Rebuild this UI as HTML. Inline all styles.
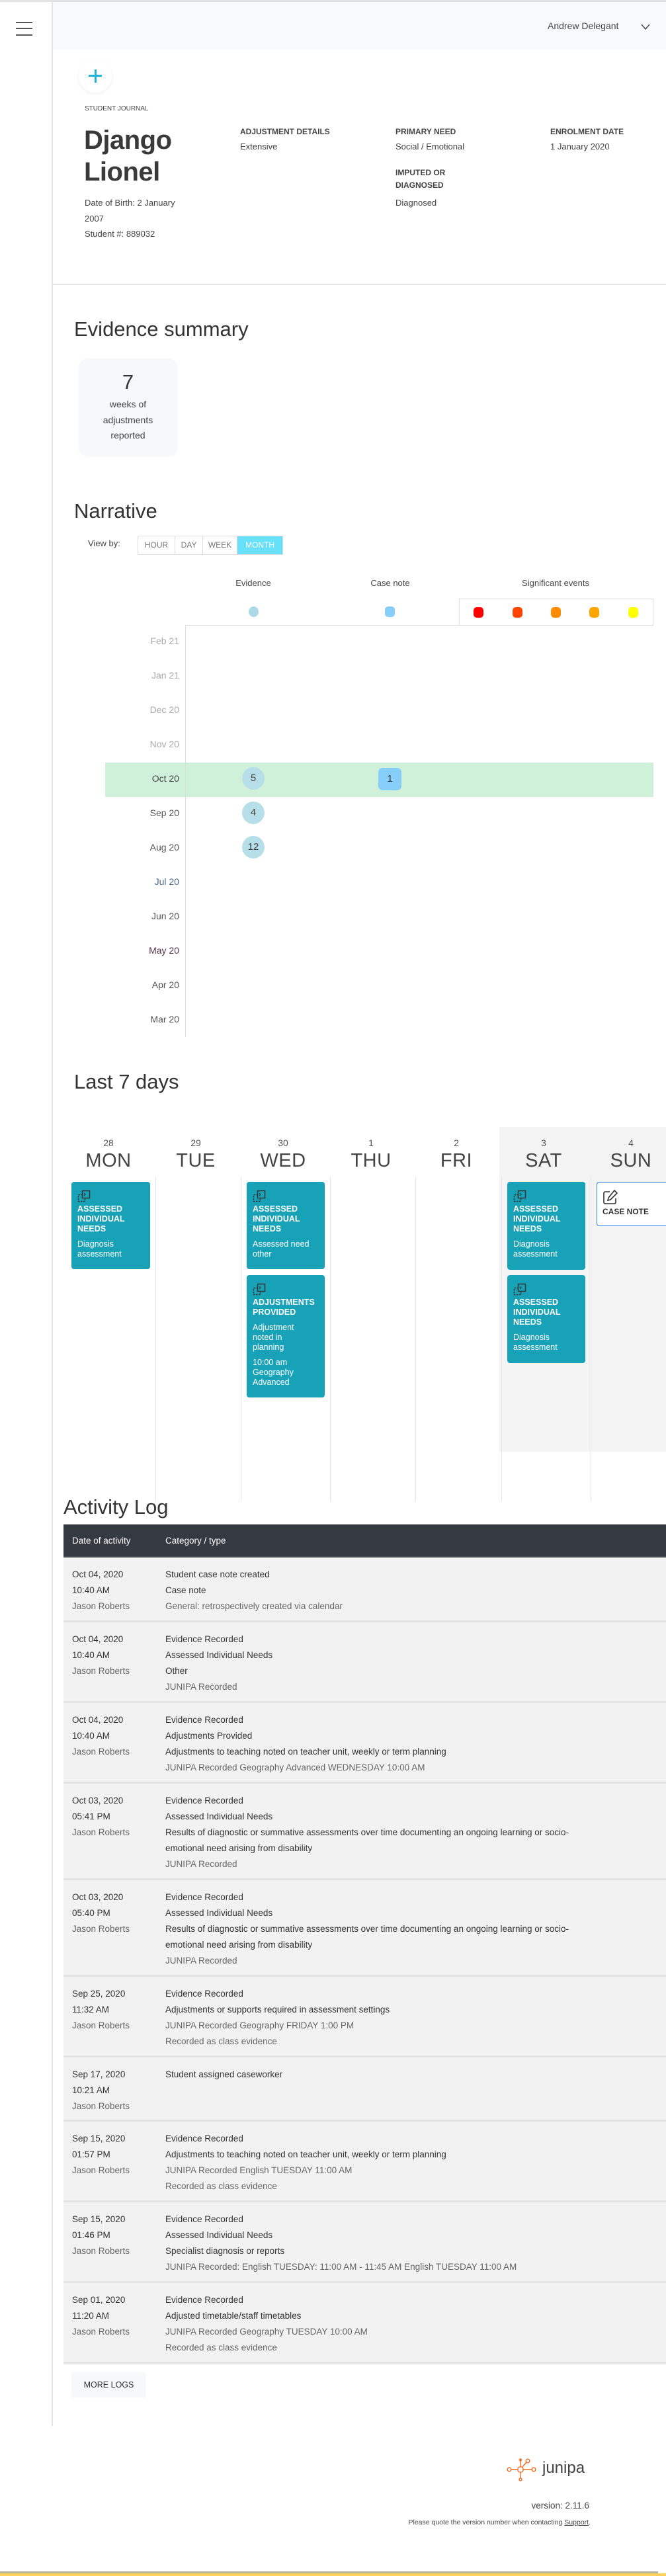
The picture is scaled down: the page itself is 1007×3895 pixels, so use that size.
<!DOCTYPE html>
<html><head><meta charset="utf-8">
<style>
*{margin:0;padding:0;box-sizing:border-box}
body{width:1007px;height:3895px;position:relative;background:#fff;font-family:"Liberation Sans",sans-serif;color:#333;overflow:hidden}
.a{position:absolute;white-space:nowrap}
.h2{font-size:31px;color:#333;line-height:36px}
.lab{font-size:12px;font-weight:bold;color:#444;text-transform:uppercase}
.val{font-size:13px;color:#444}
.mo{position:absolute;left:160px;width:111px;text-align:right;font-size:14px;color:#555;line-height:20px}
.badge{position:absolute;width:34px;height:34px;border-radius:50%;background:#b7dfe9;font-size:15px;color:#444;text-align:center;line-height:34px}
.dn{position:absolute;width:120px;text-align:center;font-size:14px;color:#555}
.dw{position:absolute;width:130px;text-align:center;font-size:29px;color:#444;letter-spacing:0.5px}
.sep{position:absolute;top:1779px;height:491px;width:1px;background:#e6e6e6}
.card{position:absolute;width:118px;background:#18a2b7;border-radius:4px;color:#fff;padding:12px 9px 0 9px}
.card svg{display:block;margin-bottom:2px}
.card .t{font-weight:bold;font-size:12.5px;line-height:15px;text-transform:uppercase}
.card .s{font-size:12.5px;line-height:15px;margin-top:8px}
.row{position:absolute;left:96px;width:911px;background:#f2f2f2;border-bottom:3px solid #e3e3e3}
.row .d{position:absolute;left:13px;top:14px;font-size:13.5px;line-height:24px;color:#333}
.row .c{position:absolute;left:154px;top:14px;font-size:13.5px;line-height:24px;color:#333;white-space:nowrap}
.g{color:#666}
.dot{position:absolute;width:15px;height:16px;border-radius:5px}
</style></head><body>

<div class="a" style="left:0;top:0;width:1007px;height:3px;background:#e3e3e3"></div>
<div class="a" style="left:78px;top:3px;width:2px;height:3665px;background:#e3e3e3"></div>
<!-- hamburger -->
<div class="a" style="left:24px;top:33px;width:25px;height:2px;background:#555"></div>
<div class="a" style="left:24px;top:42px;width:25px;height:2px;background:#555"></div>
<div class="a" style="left:24px;top:52px;width:25px;height:2px;background:#555"></div>

<!-- header -->
<div class="a" style="left:80px;top:3px;width:927px;height:72px;background:#f8f9fa"></div>
<div class="a" style="left:828px;top:31px;font-size:14px;color:#444">Andrew Delegant</div>
<svg class="a" style="left:969px;top:36px" width="14" height="10" viewBox="0 0 14 10"><path d="M1 1 L7 8 L13 1" fill="none" stroke="#444" stroke-width="1.4"/></svg>

<div class="a" style="left:119px;top:90px;width:50px;height:50px;border-radius:50%;background:#fff;box-shadow:0 2px 6px rgba(0,0,0,0.06)"></div>
<div class="a" style="left:134px;top:113px;width:20px;height:3px;background:#22b3dc"></div>
<div class="a" style="left:142.5px;top:105px;width:3px;height:20px;background:#22b3dc"></div>

<div class="a" style="left:128px;top:159px;font-size:10px;color:#444">STUDENT JOURNAL</div>
<div class="a" style="left:127px;top:188px;font-size:40px;font-weight:bold;color:#3a3a3a;line-height:48px;letter-spacing:-0.5px">Django<br>Lionel</div>
<div class="a" style="left:128px;top:295px;font-size:13px;color:#444;line-height:23.5px">Date of Birth: 2 January<br>2007<br>Student #: 889032</div>

<div class="a lab" style="left:363px;top:192px">Adjustment details</div>
<div class="a val" style="left:363px;top:214px">Extensive</div>
<div class="a lab" style="left:598px;top:192px">Primary need</div>
<div class="a val" style="left:598px;top:214px">Social / Emotional</div>
<div class="a lab" style="left:598px;top:252px;line-height:18.5px">Imputed or<br>diagnosed</div>
<div class="a val" style="left:598px;top:299px">Diagnosed</div>
<div class="a lab" style="left:832px;top:192px">Enrolment date</div>
<div class="a val" style="left:832px;top:214px">1 January 2020</div>
<div class="a" style="left:80px;top:429px;width:927px;height:2px;background:#e6e6e6"></div>

<!-- Evidence summary -->
<div class="a h2" style="left:112px;top:480px">Evidence summary</div>
<div class="a" style="left:119px;top:542px;width:149px;height:148px;background:#f7f8fa;border-radius:14px;text-align:center;box-shadow:0 1px 3px rgba(0,0,0,0.03)">
<div style="margin-top:18px;font-size:31px;color:#333;line-height:36px">7</div>
<div style="margin-top:4px;font-size:14px;color:#444;line-height:23.5px">weeks of<br>adjustments<br>reported</div>
</div>

<!-- Narrative -->
<div class="a h2" style="left:112px;top:755px">Narrative</div>
<div class="a" style="left:133px;top:814px;font-size:13px;color:#444">View by:</div>
<div class="a" style="left:208px;top:810px;height:29px;width:220px;border:1px solid #ddd;display:flex;font-size:12px;color:#777;line-height:27px">
<div style="width:56px;text-align:center;border-right:1px solid #ddd">HOUR</div>
<div style="width:42px;text-align:center;border-right:1px solid #ddd">DAY</div>
<div style="width:52px;text-align:center;border-right:1px solid #ddd">WEEK</div>
<div style="flex:1;text-align:center;background:#67e0fa;color:#fff">MONTH</div>
</div>

<div class="a" style="left:343px;top:874px;width:80px;text-align:center;font-size:13px;color:#444">Evidence</div>
<div class="a" style="left:550px;top:874px;width:80px;text-align:center;font-size:13px;color:#444">Case note</div>
<div class="a" style="left:780px;top:874px;width:120px;text-align:center;font-size:13px;color:#444">Significant events</div>
<div class="dot" style="left:376px;top:917px;background:#add8e6;border-radius:50%"></div>
<div class="dot" style="left:582px;top:917px;background:#87cefa"></div>
<div class="a" style="left:694px;top:905px;width:294px;height:41px;border:1px solid #ddd;border-bottom:none"></div>
<div class="dot" style="left:716px;top:918px;background:#ff0000"></div>
<div class="dot" style="left:775px;top:918px;background:#ff4500"></div>
<div class="dot" style="left:833px;top:918px;background:#ff8c00"></div>
<div class="dot" style="left:891px;top:918px;background:#ffa500"></div>
<div class="dot" style="left:950px;top:918px;background:#ffff00"></div>
<div class="a" style="left:280px;top:945px;width:708px;height:1px;background:#ddd"></div>
<div class="a" style="left:159px;top:1153px;width:829px;height:52px;background:#cff0d9"></div>
<div class="a" style="left:280px;top:945px;width:1px;height:623px;background:#ddd"></div>

<div class="mo" style="top:959px;color:#aaa">Feb 21</div>
<div class="mo" style="top:1011px;color:#aaa">Jan 21</div>
<div class="mo" style="top:1063px;color:#aaa">Dec 20</div>
<div class="mo" style="top:1115px;color:#aaa">Nov 20</div>
<div class="mo" style="top:1167px;color:#444">Oct 20</div>
<div class="mo" style="top:1219px">Sep 20</div>
<div class="mo" style="top:1271px">Aug 20</div>
<div class="mo" style="top:1323px;color:#4a6a8a">Jul 20</div>
<div class="mo" style="top:1375px">Jun 20</div>
<div class="mo" style="top:1427px;color:#553344">May 20</div>
<div class="mo" style="top:1479px">Apr 20</div>
<div class="mo" style="top:1531px">Mar 20</div>
<div class="badge" style="left:366px;top:1160px">5</div>
<div class="badge" style="left:366px;top:1212px">4</div>
<div class="badge" style="left:366px;top:1264px">12</div>
<div class="a" style="left:572px;top:1161px;width:35px;height:34px;border-radius:7px;background:#87cefa;text-align:center;line-height:34px;font-size:15px;color:#333">1</div>

<!-- Last 7 days -->
<div class="a h2" style="left:112px;top:1618px">Last 7 days</div>
<div class="a" style="left:755px;top:1704px;width:252px;height:491px;background:#f4f4f4"></div>
<div class="sep" style="left:235px"></div><div class="sep" style="left:364px"></div><div class="sep" style="left:499px"></div><div class="sep" style="left:628px"></div><div class="sep" style="left:758px"></div><div class="sep" style="left:893px"></div>

<div class="dn" style="left:104px;top:1720px">28</div><div class="dw" style="left:99px;top:1739px">MON</div>
<div class="dn" style="left:236px;top:1720px">29</div><div class="dw" style="left:231px;top:1739px">TUE</div>
<div class="dn" style="left:368px;top:1720px">30</div><div class="dw" style="left:363px;top:1739px">WED</div>
<div class="dn" style="left:501px;top:1720px">1</div><div class="dw" style="left:496px;top:1739px">THU</div>
<div class="dn" style="left:630px;top:1720px">2</div><div class="dw" style="left:625px;top:1739px">FRI</div>
<div class="dn" style="left:762px;top:1720px">3</div><div class="dw" style="left:757px;top:1739px">SAT</div>
<div class="dn" style="left:894px;top:1720px">4</div><div class="dw" style="left:889px;top:1739px">SUN</div>

<div class="card" style="left:108px;top:1787px;width:119px;height:132px">
<svg width="22" height="20" viewBox="0 0 22 20"><rect x="1.5" y="7.5" width="10" height="10" fill="none" stroke="#333" stroke-width="1.5" stroke-dasharray="2.5 1.5"/><rect x="7.5" y="1.5" width="11" height="11" fill="#18a2b7" stroke="#333" stroke-width="1.5"/><path d="M10 5 L12 7 L10 9" fill="none" stroke="#333" stroke-width="1.2"/></svg>
<div class="t">Assessed<br>individual<br>needs</div><div class="s">Diagnosis<br>assessment</div></div>

<div class="card" style="left:373px;top:1787px;height:132px">
<svg width="22" height="20" viewBox="0 0 22 20"><rect x="1.5" y="7.5" width="10" height="10" fill="none" stroke="#333" stroke-width="1.5" stroke-dasharray="2.5 1.5"/><rect x="7.5" y="1.5" width="11" height="11" fill="#18a2b7" stroke="#333" stroke-width="1.5"/><path d="M10 5 L12 7 L10 9" fill="none" stroke="#333" stroke-width="1.2"/></svg>
<div class="t">Assessed<br>individual<br>needs</div><div class="s">Assessed need<br>other</div></div>

<div class="card" style="left:373px;top:1928px;height:185px">
<svg width="22" height="20" viewBox="0 0 22 20"><rect x="1.5" y="7.5" width="10" height="10" fill="none" stroke="#333" stroke-width="1.5" stroke-dasharray="2.5 1.5"/><rect x="7.5" y="1.5" width="11" height="11" fill="#18a2b7" stroke="#333" stroke-width="1.5"/><path d="M10 5 L12 7 L10 9" fill="none" stroke="#333" stroke-width="1.2"/></svg>
<div class="t">Adjustments<br>provided</div><div class="s">Adjustment<br>noted in<br>planning</div><div class="s">10:00 am<br>Geography<br>Advanced</div></div>

<div class="card" style="left:767px;top:1787px;height:133px">
<svg width="22" height="20" viewBox="0 0 22 20"><rect x="1.5" y="7.5" width="10" height="10" fill="none" stroke="#333" stroke-width="1.5" stroke-dasharray="2.5 1.5"/><rect x="7.5" y="1.5" width="11" height="11" fill="#18a2b7" stroke="#333" stroke-width="1.5"/><path d="M10 5 L12 7 L10 9" fill="none" stroke="#333" stroke-width="1.2"/></svg>
<div class="t">Assessed<br>individual<br>needs</div><div class="s">Diagnosis<br>assessment</div></div>

<div class="card" style="left:767px;top:1928px;height:133px">
<svg width="22" height="20" viewBox="0 0 22 20"><rect x="1.5" y="7.5" width="10" height="10" fill="none" stroke="#333" stroke-width="1.5" stroke-dasharray="2.5 1.5"/><rect x="7.5" y="1.5" width="11" height="11" fill="#18a2b7" stroke="#333" stroke-width="1.5"/><path d="M10 5 L12 7 L10 9" fill="none" stroke="#333" stroke-width="1.2"/></svg>
<div class="t">Assessed<br>individual<br>needs</div><div class="s">Diagnosis<br>assessment</div></div>

<div class="a" style="left:902px;top:1787px;width:110px;height:67px;background:#fff;border:1px solid #2a7de1;border-radius:4px;padding:10px 0 0 8px">
<svg width="24" height="24" viewBox="0 0 24 24"><path d="M11 4 H4 A2 2 0 0 0 2 6 V20 A2 2 0 0 0 4 22 H18 A2 2 0 0 0 20 20 V14" fill="none" stroke="#333" stroke-width="1.6"/><path d="M18 2 L22 6 L12 16 L8 17 L9 13 Z" fill="none" stroke="#333" stroke-width="1.6"/></svg>
<div style="font-size:12px;font-weight:bold;color:#333;margin-top:-2px">CASE NOTE</div></div>

<!-- Activity log -->
<div class="a h2" style="left:96px;top:2261px">Activity Log</div>
<div class="a" style="left:96px;top:2305px;width:911px;height:50px;background:#343a40;border-bottom:2px solid #454d55"></div>
<div class="a" style="left:109px;top:2322px;font-size:13.5px;color:#fff">Date of activity</div>
<div class="a" style="left:250px;top:2322px;font-size:13.5px;color:#fff">Category / type</div>

<div class="row" style="top:2355px;height:98px"><div class="d">Oct 04, 2020<br>10:40 AM<br><span class="g">Jason Roberts</span></div><div class="c">Student case note created<br>Case note<br><span class="g">General: retrospectively created via calendar</span></div></div>
<div class="row" style="top:2453px;height:122px"><div class="d">Oct 04, 2020<br>10:40 AM<br><span class="g">Jason Roberts</span></div><div class="c">Evidence Recorded<br>Assessed Individual Needs<br>Other<br><span class="g">JUNIPA Recorded</span></div></div>
<div class="row" style="top:2575px;height:122px"><div class="d">Oct 04, 2020<br>10:40 AM<br><span class="g">Jason Roberts</span></div><div class="c">Evidence Recorded<br>Adjustments Provided<br>Adjustments to teaching noted on teacher unit, weekly or term planning<br><span class="g">JUNIPA Recorded Geography Advanced WEDNESDAY 10:00 AM</span></div></div>
<div class="row" style="top:2697px;height:146px"><div class="d">Oct 03, 2020<br>05:41 PM<br><span class="g">Jason Roberts</span></div><div class="c">Evidence Recorded<br>Assessed Individual Needs<br>Results of diagnostic or summative assessments over time documenting an ongoing learning or socio-<br>emotional need arising from disability<br><span class="g">JUNIPA Recorded</span></div></div>
<div class="row" style="top:2843px;height:146px"><div class="d">Oct 03, 2020<br>05:40 PM<br><span class="g">Jason Roberts</span></div><div class="c">Evidence Recorded<br>Assessed Individual Needs<br>Results of diagnostic or summative assessments over time documenting an ongoing learning or socio-<br>emotional need arising from disability<br><span class="g">JUNIPA Recorded</span></div></div>
<div class="row" style="top:2989px;height:122px"><div class="d">Sep 25, 2020<br>11:32 AM<br><span class="g">Jason Roberts</span></div><div class="c">Evidence Recorded<br>Adjustments or supports required in assessment settings<br><span class="g">JUNIPA Recorded Geography FRIDAY 1:00 PM<br>Recorded as class evidence</span></div></div>
<div class="row" style="top:3111px;height:97px"><div class="d">Sep 17, 2020<br>10:21 AM<br><span class="g">Jason Roberts</span></div><div class="c">Student assigned caseworker</div></div>
<div class="row" style="top:3208px;height:122px"><div class="d">Sep 15, 2020<br>01:57 PM<br><span class="g">Jason Roberts</span></div><div class="c">Evidence Recorded<br>Adjustments to teaching noted on teacher unit, weekly or term planning<br><span class="g">JUNIPA Recorded English TUESDAY 11:00 AM<br>Recorded as class evidence</span></div></div>
<div class="row" style="top:3330px;height:122px"><div class="d">Sep 15, 2020<br>01:46 PM<br><span class="g">Jason Roberts</span></div><div class="c">Evidence Recorded<br>Assessed Individual Needs<br>Specialist diagnosis or reports<br><span class="g">JUNIPA Recorded: English TUESDAY: 11:00 AM - 11:45 AM English TUESDAY 11:00 AM</span></div></div>
<div class="row" style="top:3452px;height:123px"><div class="d">Sep 01, 2020<br>11:20 AM<br><span class="g">Jason Roberts</span></div><div class="c">Evidence Recorded<br>Adjusted timetable/staff timetables<br><span class="g">JUNIPA Recorded Geography TUESDAY 10:00 AM<br>Recorded as class evidence</span></div></div>

<div class="a" style="left:108px;top:3587px;width:113px;height:38px;background:#f7f8fa;border-radius:3px;font-size:12.5px;color:#333;text-align:center;line-height:38px">MORE LOGS</div>

<!-- footer -->
<svg class="a" style="left:766px;top:3716px" width="46" height="38" viewBox="0 0 46 38">
<g fill="none" stroke="#f26b21" stroke-width="1.4"><circle cx="4" cy="18" r="2.8"/><circle cx="21" cy="18" r="4.2"/><circle cx="41" cy="18" r="2.8"/><circle cx="32" cy="5" r="2.8"/><circle cx="21" cy="33" r="2"/><path d="M7 18 H17 M25 18 H38 M21 5 V14 M21 22 V31 M23.5 14.5 L30 7"/></g><circle cx="21" cy="3.5" r="2.2" fill="#f26b21"/></svg>
<div class="a" style="left:820px;top:3718px;font-size:24px;color:#444">junipa</div>
<div class="a" style="left:700px;top:3781px;width:191px;text-align:right;font-size:13.5px;color:#444">version: 2.11.6</div>
<div class="a" style="left:500px;top:3808px;width:393px;text-align:right;font-size:10.5px;color:#444">Please quote the version number when contacting <u>Support</u>.</div>
<div class="a" style="left:0;top:3888px;width:995px;height:3px;background:#b8b2a2"></div>
<div class="a" style="left:0;top:3891px;width:1007px;height:4px;background:#fdd05c"></div>
</body></html>
